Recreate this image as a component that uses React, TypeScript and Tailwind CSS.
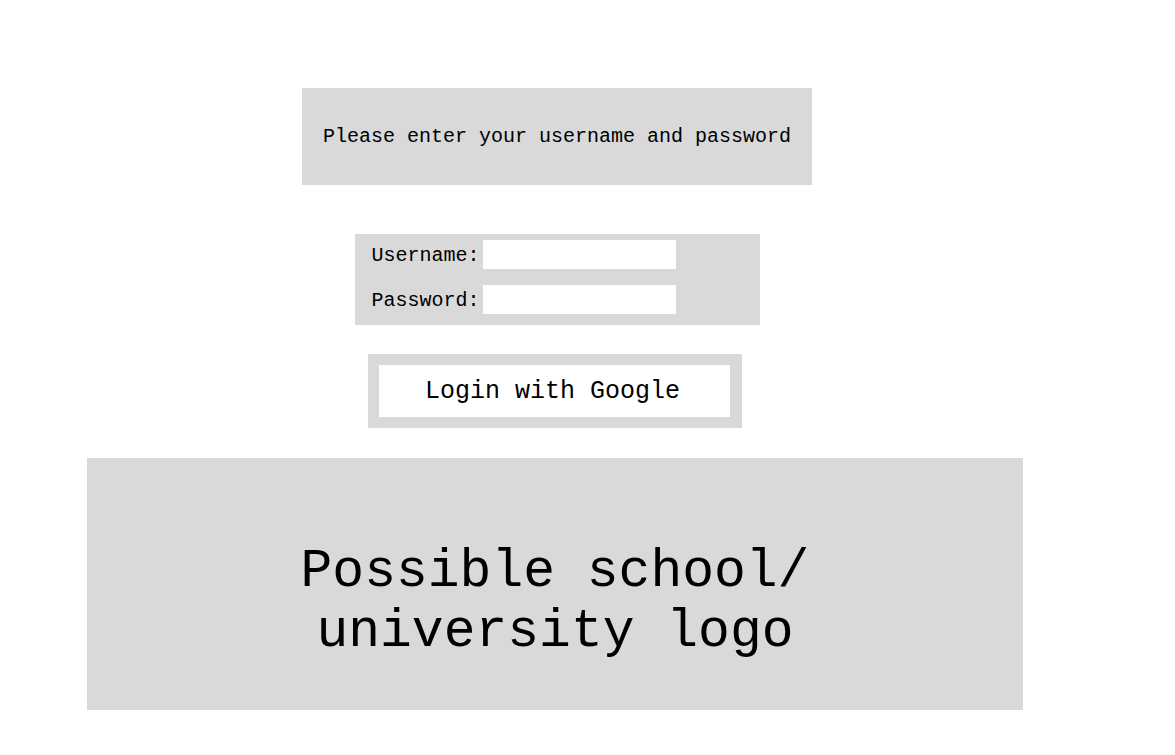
import { useState } from "react";

export default function App() {
  const [username, setUsername] = useState("");
  const [password, setPassword] = useState("");

  return (
    <div className="min-h-screen w-full bg-white" style={{ fontFamily: '"Liberation Mono", "Courier New", monospace' }}>
      <div className="w-[1112px] flex flex-col items-center pt-[88px] text-black">
        {/* Prompt */}
        <div className="ml-[2px] w-[510px] h-[97px] bg-[#d9d9d9] flex items-center justify-center">
          <p className="text-[20px] leading-none">Please enter your username and password</p>
        </div>

        {/* Credentials */}
        <div className="ml-[2px] mt-[49px] w-[405px] bg-[#d9d9d9] pl-[17px] pt-[6px] pb-[11px] flex flex-col gap-[16px]">
          <label className="flex items-center">
            <span className="text-[20px] w-[111px] leading-none pt-[2px]">Username:</span>
            <input
              type="text"
              value={username}
              onChange={(e) => setUsername(e.target.value)}
              className="w-[193px] h-[29px] bg-white outline-none px-1 text-[16px]"
            />
          </label>
          <label className="flex items-center">
            <span className="text-[20px] w-[111px] leading-none pt-[2px]">Password:</span>
            <input
              type="password"
              value={password}
              onChange={(e) => setPassword(e.target.value)}
              className="w-[193px] h-[29px] bg-white outline-none px-1 text-[16px]"
            />
          </label>
        </div>

        {/* Google login */}
        <div className="mr-[2px] mt-[29px] w-[374px] h-[74px] bg-[#d9d9d9] p-[11px] pr-[12px]">
          <button className="w-full h-full bg-white text-[25px] leading-none cursor-pointer pr-[4px]">
            Login with Google
          </button>
        </div>

        {/* Logo placeholder */}
        <div className="mr-[2px] mt-[30px] w-[936px] h-[252px] bg-[#d9d9d9] flex items-center justify-center pt-[36px]">
          <p className="text-[53px] leading-[60px] text-center">
            Possible school/
            <br />
            university logo
          </p>
        </div>
      </div>
    </div>
  );
}
